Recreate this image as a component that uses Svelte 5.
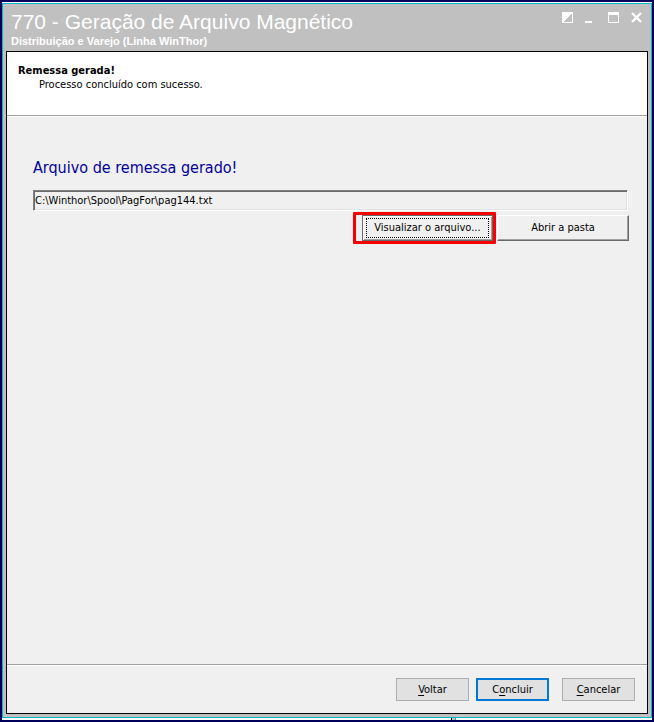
<script lang="ts">
  let filePath = $state("C:\\Winthor\\Spool\\PagFor\\pag144.txt")
</script>

<div class="desktop">
  <main class="window">
    <header class="titlebar">
      <div class="titles">
        <h1>770 - Geração de Arquivo Magnético</h1>
        <p>Distribuição e Varejo (Linha WinThor)</p>
      </div>
      <div class="controls">
        <button aria-label="Alternar">
          <svg width="11" height="11" viewBox="0 0 11 11" shape-rendering="crispEdges">
            <path d="M0 0H11V11H0ZM10 1V10H1Z" fill="#fff" fill-rule="evenodd" />
          </svg>
        </button>
        <button aria-label="Minimizar">
          <svg width="11" height="11" viewBox="0 0 11 11" shape-rendering="crispEdges">
            <path d="M0 9H7V11H0Z" fill="#fff" />
          </svg>
        </button>
        <button aria-label="Maximizar">
          <svg width="11" height="11" viewBox="0 0 11 11" shape-rendering="crispEdges">
            <path d="M0 0H11V11H0ZM1 3V10H10V3Z" fill="#fff" fill-rule="evenodd" />
          </svg>
        </button>
        <button aria-label="Fechar">
          <svg width="11" height="11" viewBox="0 0 11 11">
            <path d="M1 1L10 10M10 1L1 10" stroke="#fff" stroke-width="2.4" />
          </svg>
        </button>
      </div>
    </header>

    <div class="client">
      <section class="banner">
        <h2>Remessa gerada!</h2>
        <p>Processo concluído com sucesso.</p>
      </section>

      <section class="content">
        <label for="file-path">Arquivo de remessa gerado!</label>
        <input id="file-path" type="text" readonly bind:value={filePath} />
        <div class="actions">
          <span class="highlight">
            <button class="classic focused"><span>Visualizar o arquivo...</span></button>
          </span>
          <button class="classic">Abrir a pasta</button>
        </div>
      </section>

      <footer>
        <button class="flat"><u>V</u>oltar</button>
        <button class="flat primary">C<u>o</u>ncluir</button>
        <button class="flat cancel"><u>C</u>ancelar</button>
      </footer>
    </div>
  </main>
  <div class="behind"></div>
</div>

<style>
  :global(body) {
    background: #00005a;
  }

  .desktop {
    --ui: Tahoma, "DejaVu Sans Condensed", "DejaVu Sans", sans-serif;

    box-sizing: border-box;
    min-height: 100vh;
    display: flex;
    flex-direction: column;
    border: 2px solid #00005a;
    background: #fff;
    padding-top: 1px;
    color: #000;
    font: 11px/14px var(--ui);
  }

  h1,
  h2,
  p {
    margin: 0;
  }

  button {
    box-sizing: border-box;
    margin: 0;
    padding: 0;
    color: inherit;
    font: inherit;
  }

  .window {
    flex: 1;
    display: flex;
    flex-direction: column;
    border: 1px solid #00b4c4;
    background: #c0c0c0;
    padding: 0 3px 3px;
  }

  .titlebar {
    display: flex;
    justify-content: space-between;
    height: 47px;
    color: #fff;
    font-family: "Liberation Sans", Arial, sans-serif;
  }

  .titles {
    padding: 6px 0 0 5px;
    white-space: nowrap;
  }

  h1 {
    font-size: 21px;
    font-weight: 400;
    line-height: 24px;
  }

  .titles p {
    font-weight: 700;
  }

  .controls {
    display: flex;
    align-items: flex-start;
    gap: 12px;
    padding: 8px 6px 0 0;
  }

  .controls button {
    width: 11px;
    height: 11px;
    border: 0;
    background: none;
  }

  .controls svg {
    display: block;
  }

  .client {
    flex: 1;
    display: flex;
    flex-direction: column;
    border: 1px solid #000;
    background: #f0f0f0;
  }

  .banner {
    box-sizing: border-box;
    height: 64px;
    padding: 11px;
    border-bottom: 1px solid #a0a0a0;
    background: #fff;
  }

  h2 {
    font-size: 11px;
    line-height: 15px;
  }

  .banner p {
    padding-left: 21px;
  }

  .content {
    flex: 1;
    display: flex;
    flex-direction: column;
    padding: 39px 18px 0 26px;
    border-top: 1px solid #fff;
  }

  label {
    margin-bottom: 10px;
    color: #00009c;
    font-size: 16px;
    line-height: 24px;
  }

  input {
    box-sizing: border-box;
    height: 21px;
    margin: 0 1px 1px 0;
    padding: 0 1px;
    border: 1px solid;
    border-color: #808080 #fff #fff #808080;
    border-radius: 0;
    outline: 0;
    background: #f0f0f0;
    box-shadow: inset 1px 1px #696969, inset -1px -1px #e3e3e3;
    color: #000;
    font: 11px/14px var(--ui);
  }

  .actions {
    display: flex;
    justify-content: flex-end;
    align-items: center;
    gap: 1px;
  }

  .highlight {
    display: flex;
    border: 3px solid #f80000;
    border-radius: 1px;
    background: #f0f0f0;
    padding-left: 6px;
  }

  .classic {
    width: 132px;
    height: 26px;
    border: 1px solid;
    border-color: #fff #696969 #696969 #fff;
    background: #f0f0f0;
    box-shadow: inset -1px -1px #a0a0a0;
  }

  .focused {
    width: 131px;
    padding: 1px;
    border-color: #696969;
    box-shadow: inset 1px 1px #fff, inset -1px -1px #a0a0a0;
  }

  .focused span {
    display: block;
    margin: 1px 2px;
    padding: 2px 0;
    border: 1px dotted #000;
  }

  footer {
    display: flex;
    justify-content: flex-end;
    gap: 7px;
    padding: 13px 12px 12px;
    border-top: 1px solid #a0a0a0;
    box-shadow: inset 0 1px #fff;
  }

  .flat {
    width: 73px;
    height: 23px;
    border: 1px solid #adadad;
    background: #e1e1e1;
  }

  .primary {
    border: 2px solid #0078d7;
  }

  .cancel {
    margin-left: 6px;
  }

  u {
    text-underline-offset: 2px;
  }

  .behind {
    width: 3px;
    height: 2px;
    margin-left: 69%;
    border-left: 1px solid #000;
    border-right: 1px solid #00b4c4;
    background: #c0c0c0;
  }
</style>
